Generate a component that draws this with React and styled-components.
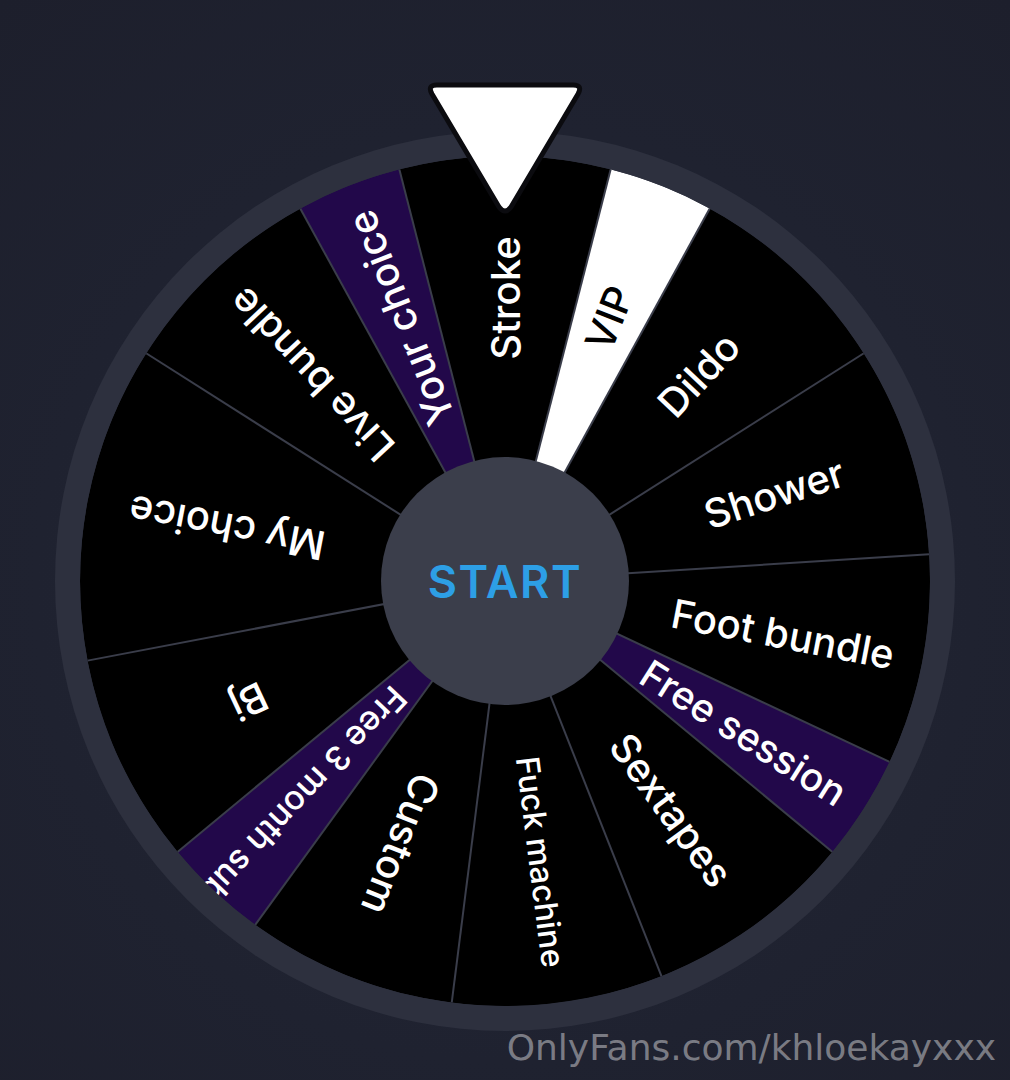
import React from "react";
import styled, { createGlobalStyle } from "styled-components";

const R = 425;
const UNIT = 14.4;

// weight = width in units of 14.4deg, listed clockwise from the top
const prizes = [
  { label: "Stroke", weight: 2 },
  { label: "VIP", weight: 1, tone: "light" },
  { label: "Dildo", weight: 2 },
  { label: "Shower", weight: 2 },
  { label: "Foot bundle", weight: 2 },
  { label: "Free session", weight: 1, tone: "purple", size: 39, at: 283 },
  { label: "Sextapes", weight: 2 },
  { label: "Fuck machine", weight: 2, size: 32 },
  { label: "Custom", weight: 2 },
  { label: "Free 3 month sub", weight: 1, tone: "purple", size: 34, at: 294 },
  { label: "Bj", weight: 2 },
  { label: "My choice", weight: 3 },
  { label: "Live bundle", weight: 2 },
  { label: "Your choice", weight: 1, tone: "purple" },
];

const fills = { dark: "#000000", light: "#ffffff", purple: "#22084a" };

const point = (deg, r) => {
  const a = (deg * Math.PI) / 180;
  return [r * Math.sin(a), -r * Math.cos(a)];
};

const slicePath = (a0, a1) => {
  const [x0, y0] = point(a0, R);
  const [x1, y1] = point(a1, R);
  const large = a1 - a0 > 180 ? 1 : 0;
  return `M0 0 L${x0} ${y0} A${R} ${R} 0 ${large} 1 ${x1} ${y1} Z`;
};

const GlobalStyle = createGlobalStyle`
  html, body {
    margin: 0;
    padding: 0;
    background: #1f2230;
  }
  body {
    font-family: Inter, "Noto Sans", sans-serif;
  }
`;

const Page = styled.main`
  position: relative;
  min-height: 1080px;
  display: flex;
  justify-content: center;
  padding-top: 131px;
  box-sizing: border-box;
  background: radial-gradient(circle at 50% 55%, #242836 0%, #1f2230 60%, #1d1f2c 100%);
  overflow: hidden;
`;

const Stage = styled.div`
  position: relative;
  width: 900px;
  height: 900px;
`;

const Rim = styled.div`
  width: 900px;
  height: 900px;
  border-radius: 50%;
  background: #2d303e;
  display: grid;
  place-items: center;
`;

const WheelSvg = styled.svg`
  display: block;
  width: 850px;
  height: 850px;
`;

const Label = styled.text`
  font-family: Inter, "Noto Sans", sans-serif;
  font-weight: 500;
  fill: ${(p) => (p.$dark ? "#000000" : "#ffffff")};
`;

const Hub = styled.button`
  position: absolute;
  left: 50%;
  top: 50%;
  width: 248px;
  height: 248px;
  margin: -124px 0 0 -124px;
  border: none;
  border-radius: 50%;
  background: #3b3e4b;
  color: #2d9fe6;
  font-family: Inter, "Noto Sans", sans-serif;
  font-size: 45px;
  font-weight: 600;
  letter-spacing: 1.5px;
  cursor: pointer;
`;

const Pointer = styled.svg`
  position: absolute;
  left: 50%;
  top: -52px;
  width: 164px;
  height: 136px;
  margin-left: -82px;
`;

const Watermark = styled.div`
  position: absolute;
  right: 14px;
  bottom: 12px;
  font-family: "DejaVu Sans", sans-serif;
  font-size: 36px;
  color: rgba(255, 255, 255, 0.42);
`;

function Wheel() {
  let start = -UNIT;
  const slices = prizes.map((p) => {
    const a0 = start;
    const a1 = start + p.weight * UNIT;
    start = a1;
    return { ...p, a0, a1, mid: (a0 + a1) / 2 };
  });

  return (
    <WheelSvg viewBox="-425 -425 850 850">
      <defs>
        <clipPath id="wheel-clip">
          <circle r={R} />
        </clipPath>
      </defs>
      <g clipPath="url(#wheel-clip)">
        {slices.map((s) => (
          <path key={s.label} d={slicePath(s.a0, s.a1)} fill={fills[s.tone || "dark"]} />
        ))}
        {slices.map((s) => {
          const [x, y] = point(s.a0, R);
          return <line key={`l-${s.label}`} x1="0" y1="0" x2={x} y2={y} stroke="#3a3d4a" strokeWidth="2" />;
        })}
        {slices.map((s) => (
          <Label
            key={`t-${s.label}`}
            $dark={s.tone === "light"}
            transform={`rotate(${s.mid - 90})`}
            x={s.at || 283}
            y="0"
            fontSize={s.size || 40}
            textAnchor="middle"
            dominantBaseline="central"
          >
            {s.label}
          </Label>
        ))}
      </g>
    </WheelSvg>
  );
}

export default function App() {
  return (
    <>
      <GlobalStyle />
      <Page>
        <Stage>
          <Rim>
            <Wheel />
          </Rim>
          <Hub type="button">START</Hub>
          <Pointer viewBox="0 0 164 136">
            <path
              d="M14 6 H150 Q160 6 155 15 L88 128 Q82 136 76 128 L9 15 Q4 6 14 6 Z"
              fill="#ffffff"
              stroke="#0b0b0f"
              strokeWidth="5"
              strokeLinejoin="round"
            />
          </Pointer>
        </Stage>
        <Watermark>OnlyFans.com/khloekayxxx</Watermark>
      </Page>
    </>
  );
}
